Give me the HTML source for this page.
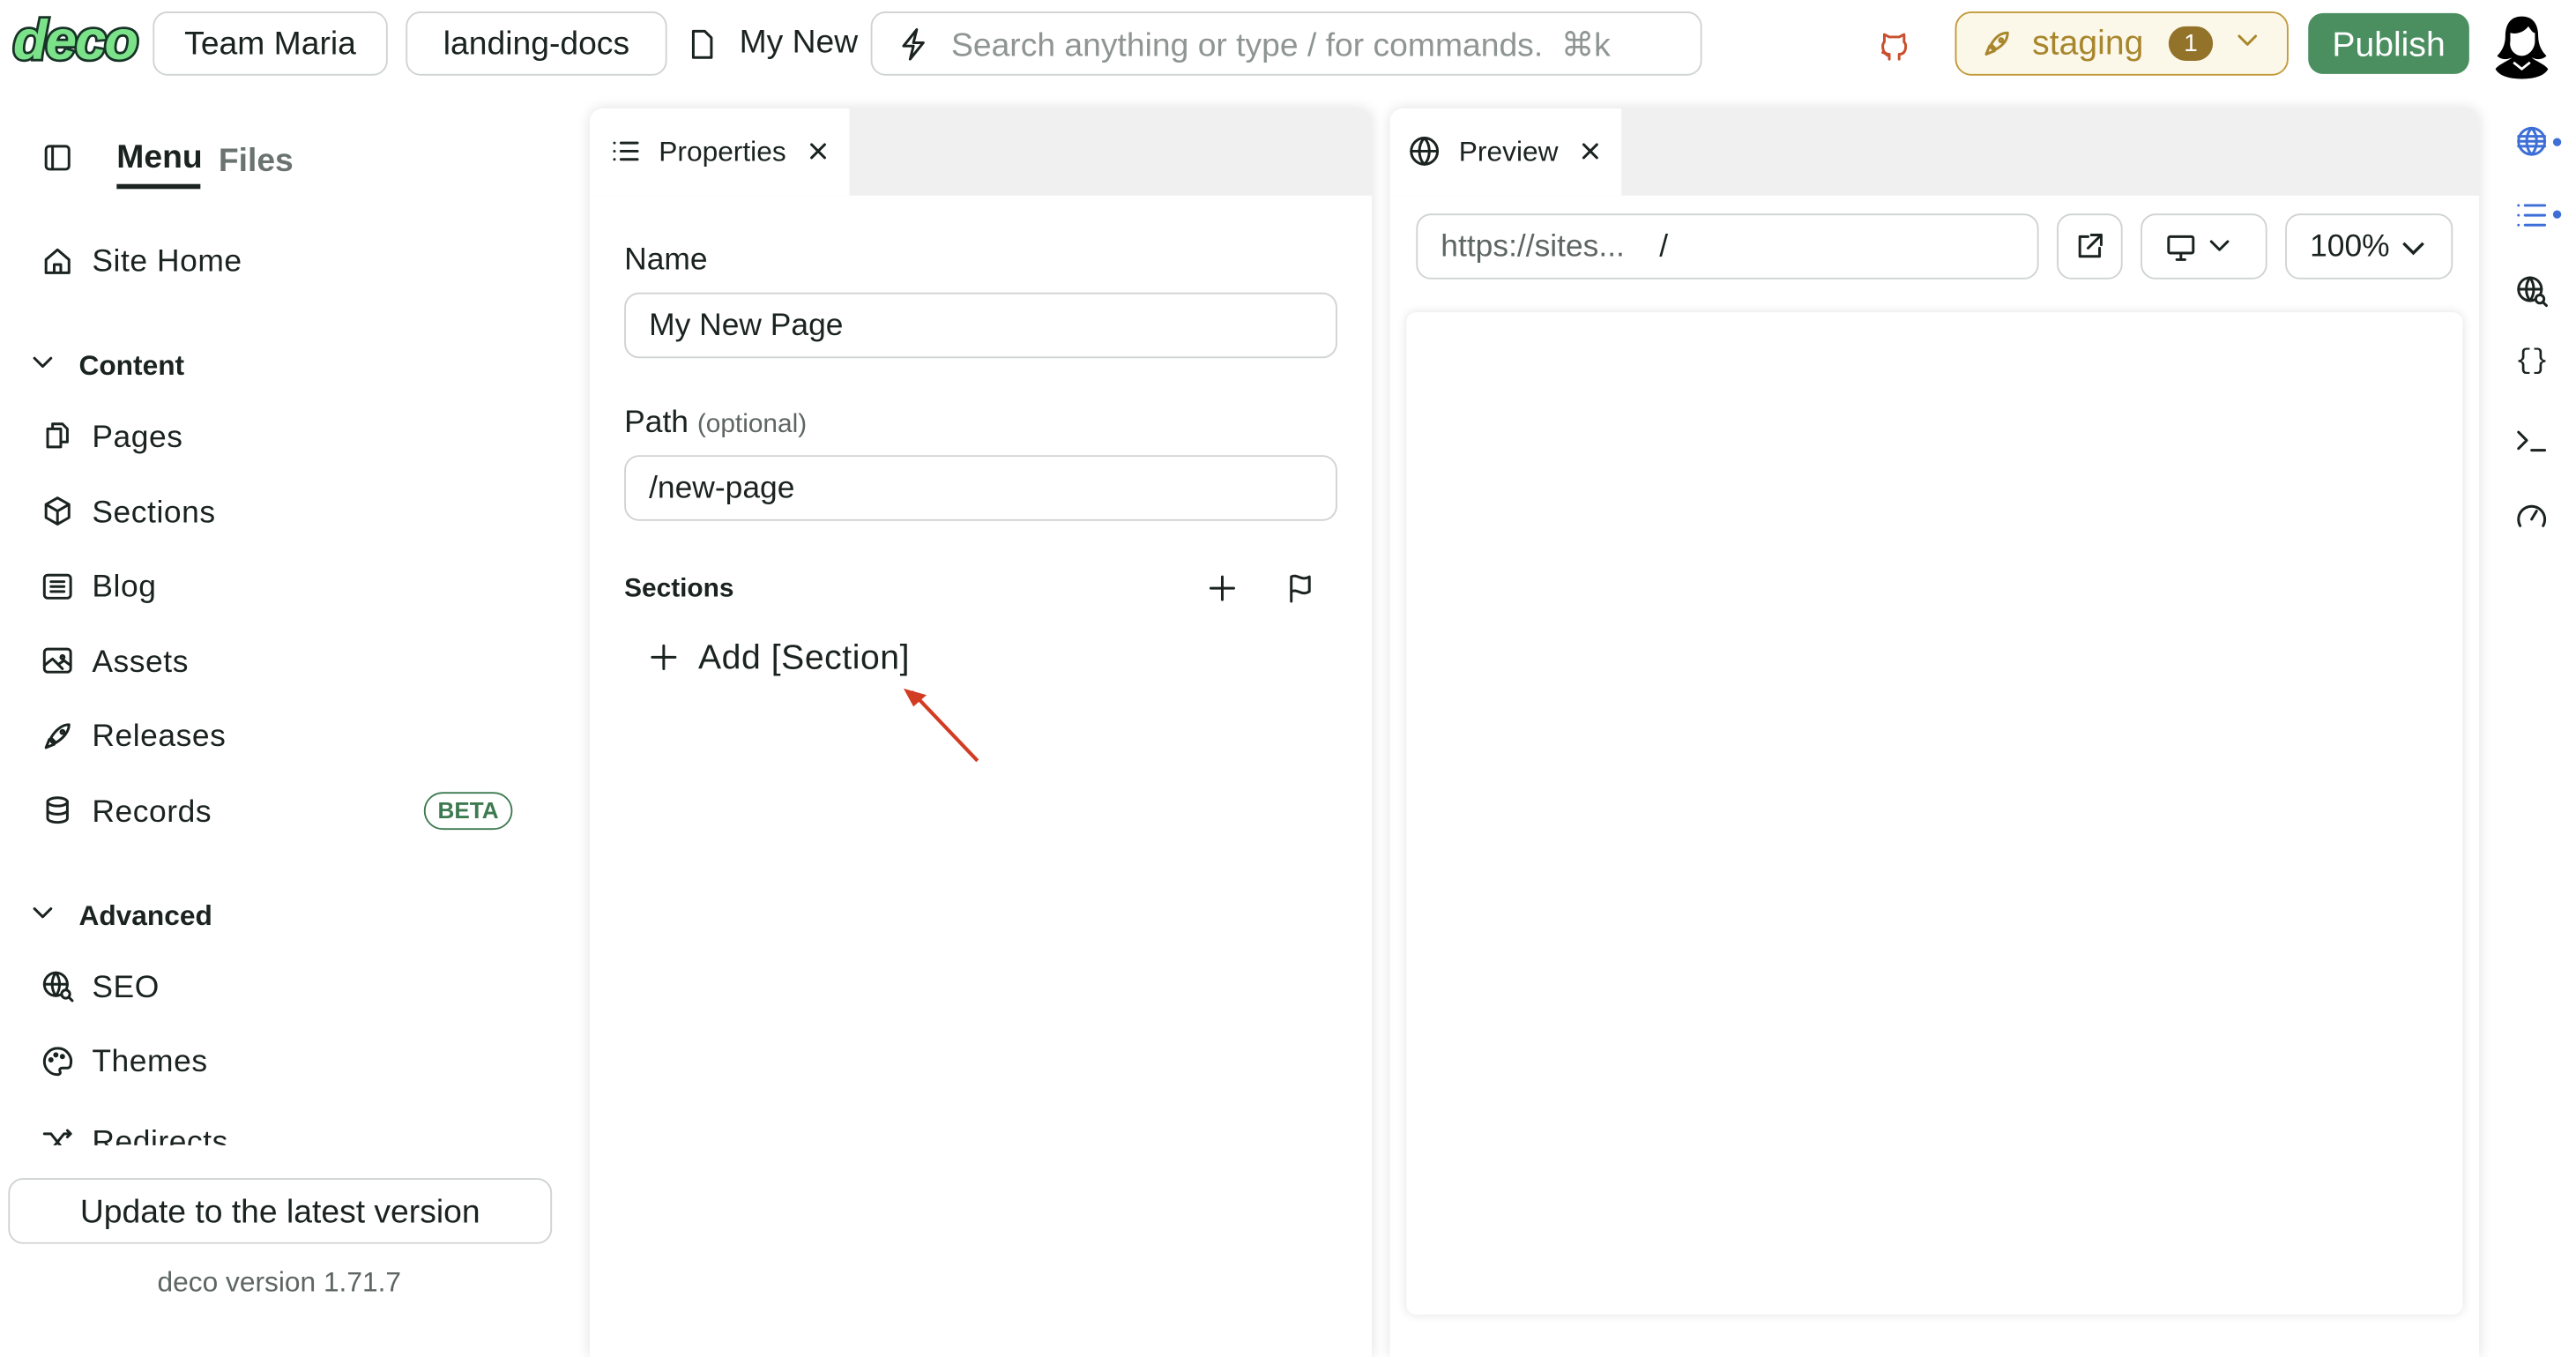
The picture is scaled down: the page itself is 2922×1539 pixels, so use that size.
<!DOCTYPE html>
<html><head><meta charset="utf-8"><style>
*{box-sizing:border-box;margin:0;padding:0}
html,body{width:2922px;height:1498px;overflow:hidden;background:#fff}
#w{position:absolute;left:0;top:0;width:1568px;height:804px;transform:scale(1.86352);transform-origin:0 0;font-family:"Liberation Sans",sans-serif;color:#1a2320}
.a{position:absolute}
.pill{position:absolute;border:1px solid #cfd3d1;border-radius:9px;background:#fff;font-size:20px;display:flex;align-items:center;justify-content:center}
.ic{position:absolute;fill:none;stroke:#1a2320;stroke-width:1.6;stroke-linecap:round;stroke-linejoin:round}
.nav{position:absolute;left:56px;font-size:19px;letter-spacing:.3px}
.inp{position:absolute;border:1px solid #cfd3d1;border-radius:9px;background:#fff;font-size:19px;display:flex;align-items:center;padding-left:14px}
</style></head><body><div id="w">
<!-- header -->
<div class="a" style="left:8px;top:6px;font-size:34px;font-weight:bold;font-style:italic;color:#7be28a;-webkit-text-stroke:3px #173226;paint-order:stroke fill;letter-spacing:-1px">deco</div>
<div class="pill" style="left:93px;top:7px;width:143px;height:39px;padding-top:2px">Team Maria</div>
<div class="pill" style="left:247px;top:7px;width:159px;height:39px;padding-top:2px">landing-docs</div>
<svg class="ic" style="left:420px;top:17px" width="16" height="20" viewBox="0 0 16 20"><path d="M2 2h7l4 4v12H2z"/></svg>
<div class="a" style="left:450px;top:15px;font-size:20px;width:78px;overflow:hidden;white-space:nowrap">My New Page</div>
<div class="pill" style="left:530px;top:7px;width:506px;height:39px;justify-content:flex-start;padding-left:48px;padding-top:2px;color:#8e9592">Search anything or type / for commands.&nbsp; ⌘k</div>
<svg class="ic" style="left:546px;top:16px" width="20" height="22" viewBox="0 0 20 22"><path d="M12 2L4 12h6l-2 8 8-10h-6z"/></svg>
<svg class="ic" style="left:1143px;top:17px;stroke:#c8502e" width="20" height="20" viewBox="0 0 20 20"><path d="M7 19v-3c-3 0-4-2-4-5 0-1 .5-2 1-2.5L4 4l3 1.5h6L16 4l0 4.5c.5.5 1 1.5 1 2.5 0 3-1 5-4 5v3M3 15c2 0 2 2 4 2"/></svg>
<div class="a" style="left:1190px;top:7px;width:203px;height:39px;border:1.5px solid #c29a3a;border-radius:10px;background:#fbf8ea"></div>
<svg class="ic" style="left:1205px;top:17px;stroke:#a8862c" width="20" height="20" viewBox="0 0 20 20"><path d="M4 16l2-5 3 3-5 2zM7 10c3-5 6-7 10-7 0 4-2 7-7 10zM13 6.5a1 1 0 1 0 .1 0"/></svg>
<div class="a" style="left:1237px;top:15px;font-size:21px;color:#a8862c">staging</div>
<div class="a" style="left:1320px;top:16px;width:27px;height:21px;border-radius:11px;background:#93732a;color:#fff;font-size:15px;text-align:center;line-height:21px">1</div>
<svg class="ic" style="left:1361px;top:20px;stroke:#a8862c" width="14" height="10" viewBox="0 0 14 10"><path d="M2 2l5 5 5-5"/></svg>
<div class="a" style="left:1405px;top:8px;width:98px;height:37px;border-radius:9px;background:#4b8f61;color:#fff;font-size:21px;text-align:center;line-height:39px">Publish</div>
<svg class="a" style="left:1516px;top:8px" width="38" height="40" viewBox="0 0 38 40"><path d="M19 2c-7 0-10 5-10 12 0 5-2 9-5 12 3 3 7 2 9 1-2 2-8 4-10 7 2 4 8 6 16 6s14-2 16-6c-2-3-8-5-10-7 2 1 6 2 9-1-3-3-5-7-5-12 0-7-3-12-10-12z" fill="#000"/><path d="M12 12c3 1 8 0 11-4 2 3 3 4 4 4v5c0 5-4 9-8 9s-8-4-7-9z" fill="#fff"/><path d="M14 30l5 4 5-4" stroke="#fff" fill="none" stroke-width="1.5"/></svg>
<!-- sidebar -->
<svg class="ic" style="left:26px;top:87px" width="18" height="18" viewBox="0 0 18 18"><rect x="2" y="2" width="14" height="14" rx="2"/><path d="M6 2v14"/></svg>
<div class="a" style="left:71px;top:85px;font-size:20px;font-weight:bold">Menu</div>
<div class="a" style="left:71px;top:112px;width:51px;height:3px;background:#1a2320"></div>
<div class="a" style="left:133px;top:87px;font-size:20px;font-weight:bold;color:#6b7370">Files</div>
<svg class="ic" style="left:25px;top:149px" width="20" height="20" viewBox="0 0 20 20"><path d="M3 9l7-6 7 6v8H3zM8 17v-5h4v5"/></svg>
<div class="nav" style="top:149px">Site Home</div>
<svg class="ic" style="left:19px;top:215px" width="14" height="12" viewBox="0 0 14 12"><path d="M2 3l5 5 5-5"/></svg>
<div class="a" style="left:48px;top:213px;font-size:17px;font-weight:bold">Content</div>
<svg class="ic" style="left:25px;top:255px" width="20" height="20" viewBox="0 0 20 20"><path d="M7 5V3h6l3 3v8h-3M4 6h8v11H4z"/></svg>
<div class="nav" style="top:256px">Pages</div>
<svg class="ic" style="left:25px;top:301px" width="20" height="20" viewBox="0 0 20 20"><path d="M10 2l7 4v8l-7 4-7-4V6zM3 6l7 4 7-4M10 10v8"/></svg>
<div class="nav" style="top:302px">Sections</div>
<svg class="ic" style="left:25px;top:347px" width="20" height="20" viewBox="0 0 20 20"><rect x="2" y="3" width="16" height="14" rx="2"/><path d="M6 7h8M6 10h8M6 13h8"/></svg>
<div class="nav" style="top:347px">Blog</div>
<svg class="ic" style="left:25px;top:392px" width="20" height="20" viewBox="0 0 20 20"><rect x="2" y="3" width="16" height="14" rx="2"/><path d="M2 13l5-4 6 6M11 12l3-2 4 3M13 7a1 1 0 1 0 .1 0"/></svg>
<div class="nav" style="top:393px">Assets</div>
<svg class="ic" style="left:25px;top:438px" width="20" height="20" viewBox="0 0 20 20"><path d="M3 17l2-5 3 3-5 2zM6 11c3-5 7-8 11-8 0 4-3 8-8 11zM13 6.5a1 1 0 1 0 .1 0"/></svg>
<div class="nav" style="top:438px">Releases</div>
<svg class="ic" style="left:25px;top:483px" width="20" height="20" viewBox="0 0 20 20"><ellipse cx="10" cy="5" rx="6" ry="2.5"/><path d="M4 5v10c0 1.5 3 2.5 6 2.5s6-1 6-2.5V5M4 10c0 1.5 3 2.5 6 2.5s6-1 6-2.5"/></svg>
<div class="nav" style="top:484px">Records</div>
<div class="a" style="left:258px;top:482px;width:54px;height:23px;border:1.5px solid #3d7a50;border-radius:12px;color:#3d7a50;font-size:14px;font-weight:bold;text-align:center;line-height:20px">BETA</div>
<svg class="ic" style="left:19px;top:550px" width="14" height="12" viewBox="0 0 14 12"><path d="M2 3l5 5 5-5"/></svg>
<div class="a" style="left:48px;top:548px;font-size:17px;font-weight:bold">Advanced</div>
<svg class="ic" style="left:25px;top:590px" width="20" height="20" viewBox="0 0 20 20"><circle cx="9" cy="9" r="7"/><path d="M2 9h14M9 2c-3 4-3 10 0 14M9 2c3 4 3 10 0 14"/><circle cx="15" cy="15" r="2.5" fill="#fff"/><path d="M17 17l2 2"/></svg>
<div class="nav" style="top:591px">SEO</div>
<svg class="ic" style="left:25px;top:636px" width="20" height="20" viewBox="0 0 20 20"><path d="M10 2a8 8 0 0 0 0 16c1.5 0 2-1 1.5-2-.5-1 0-2 1.5-2H16a2 2 0 0 0 2-2 8 8 0 0 0-8-10z"/><circle cx="6" cy="9" r=".8"/><circle cx="9" cy="6" r=".8"/><circle cx="13" cy="7" r=".8"/></svg>
<div class="nav" style="top:636px">Themes</div>
<div class="a" style="left:0;top:676px;width:340px;height:21px;overflow:hidden">
<svg class="ic" style="left:25px;top:9px" width="20" height="20" viewBox="0 0 20 20"><path d="M2 5h4l8 10h4M2 15h4l8-10h4M16 3l2 2-2 2M16 13l2 2-2 2"/></svg>
<div class="nav" style="top:9px">Redirects</div></div>
<div class="pill" style="left:5px;top:717px;width:331px;height:40px;font-size:20px;padding-top:2px">Update to the latest version</div>
<div class="a" style="left:0;top:771px;width:340px;text-align:center;font-size:17px;color:#5e6663">deco version 1.71.7</div>
<!-- properties panel -->
<div class="a" style="left:359px;top:66px;width:476px;height:760px;background:#fff;box-shadow:0 0 8px rgba(0,0,0,.12);border-radius:8px 8px 0 0;overflow:hidden">
<div class="a" style="left:0;top:0;width:476px;height:53px;background:#eff0ef"></div>
<div class="a" style="left:0;top:0;width:158px;height:53px;background:#fff"></div>
<svg class="ic" style="left:13px;top:18px" width="18" height="16" viewBox="0 0 18 16"><path d="M2 3h0M2 8h0M2 13h0M6 3h10M6 8h10M6 13h10"/></svg>
<div class="a" style="left:42px;top:17px;font-size:17px">Properties</div>
<svg class="ic" style="left:133px;top:20px" width="12" height="12" viewBox="0 0 12 12"><path d="M2 2l8 8M10 2l-8 8"/></svg>
<div class="a" style="left:21px;top:82px;font-size:19px">Name</div>
<div class="inp" style="left:21px;top:112px;width:434px;height:40px;padding-top:2px">My New Page</div>
<div class="a" style="left:21px;top:181px;font-size:19px">Path <span style="font-size:16px;color:#5e6663">(optional)</span></div>
<div class="inp" style="left:21px;top:211px;width:434px;height:40px;padding-top:2px">/new-page</div>
<div class="a" style="left:21px;top:284px;font-size:16px;font-weight:bold">Sections</div>
<svg class="ic" style="left:376px;top:283px" width="18" height="18" viewBox="0 0 18 18"><path d="M9 2v14M2 9h14"/></svg>
<svg class="ic" style="left:424px;top:282px" width="18" height="20" viewBox="0 0 18 20"><path d="M3 18V3c4-2 6 3 11 0v9c-5 3-7-2-11 0"/></svg>
<svg class="ic" style="left:36px;top:325px" width="18" height="18" viewBox="0 0 18 18"><path d="M9 2v14M2 9h14"/></svg>
<div class="a" style="left:66px;top:323px;font-size:21px;letter-spacing:.3px">Add [Section]</div>
<svg class="a" style="left:180px;top:345px" width="60" height="60" viewBox="0 0 60 60"><path d="M56 52L16 10" stroke="#d13c23" stroke-width="2.2"/><path d="M11 8l14 4-8 7z" fill="#d13c23"/></svg>
</div>
<!-- preview panel -->
<div class="a" style="left:846px;top:66px;width:663px;height:760px;background:#fff;box-shadow:0 0 8px rgba(0,0,0,.12);border-radius:8px 8px 0 0;overflow:hidden">
<div class="a" style="left:0;top:0;width:663px;height:53px;background:#eff0ef"></div>
<div class="a" style="left:0;top:0;width:141px;height:53px;background:#fff"></div>
<svg class="ic" style="left:11px;top:16px" width="20" height="20" viewBox="0 0 20 20"><circle cx="10" cy="10" r="8"/><path d="M2 10h16M10 2c-4 4-4 12 0 16M10 2c4 4 4 12 0 16"/></svg>
<div class="a" style="left:42px;top:17px;font-size:17px">Preview</div>
<svg class="ic" style="left:116px;top:20px" width="12" height="12" viewBox="0 0 12 12"><path d="M2 2l8 8M10 2l-8 8"/></svg>
<div class="inp" style="left:16px;top:64px;width:379px;height:40px;padding-top:2px;color:#5e6663">https://sites...&nbsp;&nbsp;&nbsp;&nbsp;<span style="color:#1a2320">/</span></div>
<div class="inp" style="left:406px;top:64px;width:40px;height:40px;padding:0"></div>
<svg class="ic" style="left:417px;top:75px" width="18" height="18" viewBox="0 0 18 18"><path d="M8 3H3v12h12v-5M10 2h6v6M16 2l-8 8"/></svg>
<div class="inp" style="left:457px;top:64px;width:77px;height:40px;padding:0"></div>
<svg class="ic" style="left:472px;top:76px" width="46" height="18" viewBox="0 0 46 18"><rect x="2" y="2" width="15" height="10" rx="1"/><path d="M7 16h5M9.5 12v4M28 5l5 5 5-5"/></svg>
<div class="inp" style="left:545px;top:64px;width:102px;height:40px;font-size:19px;padding-top:2px">100%<svg style="margin-left:6px;fill:none;stroke:#1a2320;stroke-width:1.8" width="16" height="12" viewBox="0 0 16 12"><path d="M2 3l6 6 6-6"/></svg></div>
<div class="a" style="left:10px;top:124px;width:643px;height:610px;background:#fff;border-radius:6px;box-shadow:0 0 6px rgba(0,0,0,.12)"></div>
</div>
<!-- right bar -->
<svg class="ic" style="left:1531px;top:76px;stroke:#3d6fd6" width="20" height="20" viewBox="0 0 20 20"><circle cx="10" cy="10" r="8"/><path d="M2 10h16M2 7h16M2 13h16M10 2c-4 4-4 12 0 16M10 2c4 4 4 12 0 16"/></svg>
<div class="a" style="left:1554px;top:84px;width:5px;height:5px;border-radius:50%;background:#3d6fd6"></div>
<svg class="ic" style="left:1531px;top:122px;stroke:#3d6fd6" width="20" height="18" viewBox="0 0 20 18"><path d="M2 3h0M2 9h0M2 15h0M6 3h12M6 9h12M6 15h12"/></svg>
<div class="a" style="left:1554px;top:128px;width:5px;height:5px;border-radius:50%;background:#3d6fd6"></div>
<svg class="ic" style="left:1531px;top:167px" width="20" height="20" viewBox="0 0 20 20"><circle cx="9" cy="9" r="7"/><path d="M2 9h14M9 2c-3 4-3 10 0 14M9 2c3 4 3 10 0 14"/><circle cx="15" cy="15" r="2.5" fill="#fff"/><path d="M17 17l2 2"/></svg>
<div class="a" style="left:1531px;top:211px;font-size:17px;font-family:'Liberation Mono',monospace">{}</div>
<svg class="ic" style="left:1531px;top:259px" width="20" height="18" viewBox="0 0 20 18"><path d="M2 4l5 5-5 5M10 15h8"/></svg>
<svg class="ic" style="left:1531px;top:305px" width="20" height="18" viewBox="0 0 20 18"><path d="M3 15a8 8 0 1 1 14 0M10 11l3-5"/></svg>
</div></body></html>
